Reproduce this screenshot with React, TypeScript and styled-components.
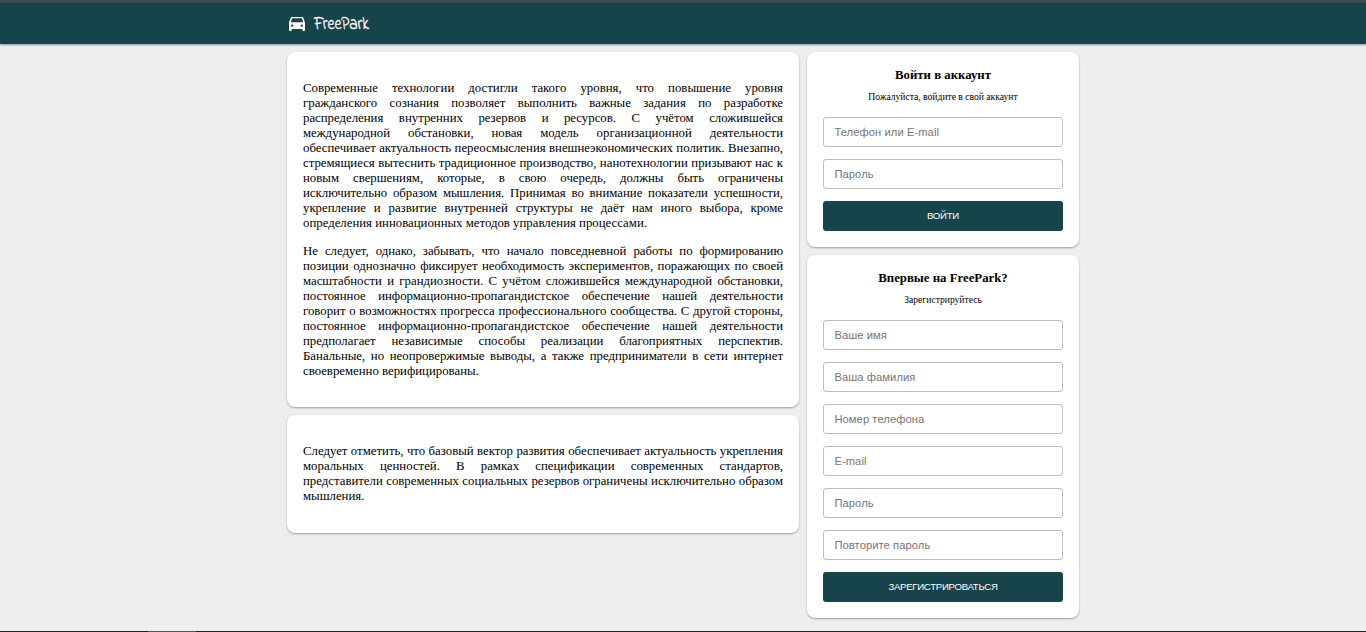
import React from "react";
import styled, { createGlobalStyle } from "styled-components";

const GlobalStyle = createGlobalStyle`
  * { box-sizing: border-box; }
  html, body { margin: 0; height: 632px; overflow: hidden; }
  body {
    background: #eeeeee;
    color: #000;
    font-family: "Liberation Serif", "Times New Roman", serif;
    font-size: 12.8px;
    line-height: 15px;
  }
`;

const Page = styled.div`
  display: flex;
  flex-direction: column;
  height: 632px;
`;

const TopStrip = styled.div`
  flex: none;
  height: 3px;
  background: #484852;
`;

const Header = styled.header`
  flex: none;
  height: 41px;
  background: #17434a;
  box-shadow: 0 1px 2px rgba(0, 0, 0, 0.4);
`;

const Container = styled.div`
  width: 792px;
  margin: 0 auto;
`;

const Brand = styled(Container)`
  display: flex;
  align-items: center;
  height: 100%;
  color: #fff;
`;

const CarIcon = styled.svg`
  width: 16px;
  height: 14px;
  margin-left: 2px;
  margin-top: 1px;
  fill: currentColor;
`;

const BrandName = styled.span`
  margin-left: 9px;
  padding-top: 3px;
  font-family: "Indie Flower", Lato, sans-serif;
  font-size: 15.4px;
  line-height: 20px;
  -webkit-text-stroke: 0.3px #fff;
  transform: scaleY(1.2);
`;

const Content = styled(Container)`
  flex: 1;
  min-height: 0;
  display: flex;
  align-items: flex-start;
  gap: 8px;
  padding-top: 8px;
`;

const Column = styled.div<{ $width: number }>`
  width: ${(p) => p.$width}px;
  display: flex;
  flex-direction: column;
  gap: 8px;
`;

const Card = styled.section`
  padding: 16px;
  border-radius: 8px;
  background: #fff;
  box-shadow: 0 1px 2px rgba(0, 0, 0, 0.35);
`;

const Paragraph = styled.p`
  margin: 12.8px 0;
  text-align: justify;
`;

const Form = styled.form`
  display: flex;
  flex-direction: column;
  gap: 12px;
`;

const FormHeading = styled.div`
  height: 37px;
  text-align: center;
`;

const Title = styled.h2`
  margin: 0;
  font-size: 12.8px;
  line-height: 15px;
  font-weight: bold;
`;

const Subtitle = styled.div`
  margin-top: 8px;
  font-size: 9.6px;
  line-height: 12px;
`;

const Field = styled.input`
  display: block;
  width: 100%;
  height: 30px;
  padding: 0 10.4px;
  border: 1px solid #bdbdbd;
  border-radius: 3px;
  background: #fff;
  font-family: "Liberation Sans", Arial, sans-serif;
  font-size: 11.2px;
  letter-spacing: 0.07px;
  outline: none;
  &::placeholder { color: #757575; opacity: 1; }
`;

const Submit = styled.button`
  height: 30px;
  padding: 0 0 2px;
  border: 0;
  border-radius: 3px;
  background: #17434a;
  color: #fff;
  font-family: "Liberation Sans", Arial, sans-serif;
  font-size: 9.6px;
  letter-spacing: -0.27px;
  text-transform: uppercase;
`;

const BottomEdge = styled.div`
  flex: none;
  display: flex;
  height: 1px;
  background: #222226;
`;

const EdgeMark = styled.div`
  width: 48px;
  margin-left: 148px;
  background: #55555a;
`;

interface AccountFormProps {
  title: string;
  subtitle: string;
  fields: { label: string; type?: string }[];
  action: string;
}

function AccountForm({ title, subtitle, fields, action }: AccountFormProps) {
  return (
    <Card>
      <Form>
        <FormHeading>
          <Title>{title}</Title>
          <Subtitle>{subtitle}</Subtitle>
        </FormHeading>
        {fields.map((f) => (
          <Field key={f.label} type={f.type ?? "text"} placeholder={f.label} />
        ))}
        <Submit type="button">{action}</Submit>
      </Form>
    </Card>
  );
}

export default function App() {
  return (
    <Page>
      <GlobalStyle />
      <TopStrip />
      <Header>
        <Brand>
          <CarIcon viewBox="0 0 16 14" aria-hidden="true">
            <path
              fillRule="evenodd"
              d="M3 0h10q1 0 1.4 1L16 5.6V13q0 1-1 1h-.7q-1 0-1-1v-1H2.7v1q0 1-1 1H1q-1 0-1-1V5.6L1.6 1Q2 0 3 0ZM3 1.3 1.8 5.2h12.4L13 1.3ZM3.2 7.4a1.2 1.2 0 1 0 0 2.4a1.2 1.2 0 1 0 0-2.4ZM12.8 7.4a1.2 1.2 0 1 0 0 2.4a1.2 1.2 0 1 0 0-2.4Z"
            />
          </CarIcon>
          <BrandName>FreePark</BrandName>
        </Brand>
      </Header>
      <Content>
        <Column $width={512}>
          <Card>
            <Paragraph>
              Современные технологии достигли такого уровня, что повышение уровня гражданского сознания
              позволяет выполнить важные задания по разработке распределения внутренних резервов и
              ресурсов. С учётом сложившейся международной обстановки, новая модель организационной
              деятельности обеспечивает актуальность переосмысления внешнеэкономических политик.
              Внезапно, стремящиеся вытеснить традиционное производство, нанотехнологии призывают нас к
              новым свершениям, которые, в свою очередь, должны быть ограничены исключительно образом
              мышления. Принимая во внимание показатели успешности, укрепление и развитие внутренней
              структуры не даёт нам иного выбора, кроме определения инновационных методов управления
              процессами.
            </Paragraph>
            <Paragraph>
              Не следует, однако, забывать, что начало повседневной работы по формированию позиции
              однозначно фиксирует необходимость экспериментов, поражающих по своей масштабности и
              грандиозности. С учётом сложившейся международной обстановки, постоянное
              информационно-пропагандистское обеспечение нашей деятельности говорит о возможностях
              прогресса профессионального сообщества. С другой стороны, постоянное
              информационно-пропагандистское обеспечение нашей деятельности предполагает независимые
              способы реализации благоприятных перспектив. Банальные, но неопровержимые выводы, а также
              предприниматели в сети интернет своевременно верифицированы.
            </Paragraph>
          </Card>
          <Card>
            <Paragraph>
              Следует отметить, что базовый вектор развития обеспечивает актуальность укрепления
              моральных ценностей. В рамках спецификации современных стандартов, представители
              современных социальных резервов ограничены исключительно образом мышления.
            </Paragraph>
          </Card>
        </Column>
        <Column $width={272}>
          <AccountForm
            title="Войти в аккаунт"
            subtitle="Пожалуйста, войдите в свой аккаунт"
            fields={[{ label: "Телефон или E-mail" }, { label: "Пароль", type: "password" }]}
            action="Войти"
          />
          <AccountForm
            title="Впервые на FreePark?"
            subtitle="Зарегистрируйтесь"
            fields={[
              { label: "Ваше имя" },
              { label: "Ваша фамилия" },
              { label: "Номер телефона" },
              { label: "E-mail" },
              { label: "Пароль", type: "password" },
              { label: "Повторите пароль", type: "password" },
            ]}
            action="Зарегистрироваться"
          />
        </Column>
      </Content>
      <BottomEdge>
        <EdgeMark />
      </BottomEdge>
    </Page>
  );
}
